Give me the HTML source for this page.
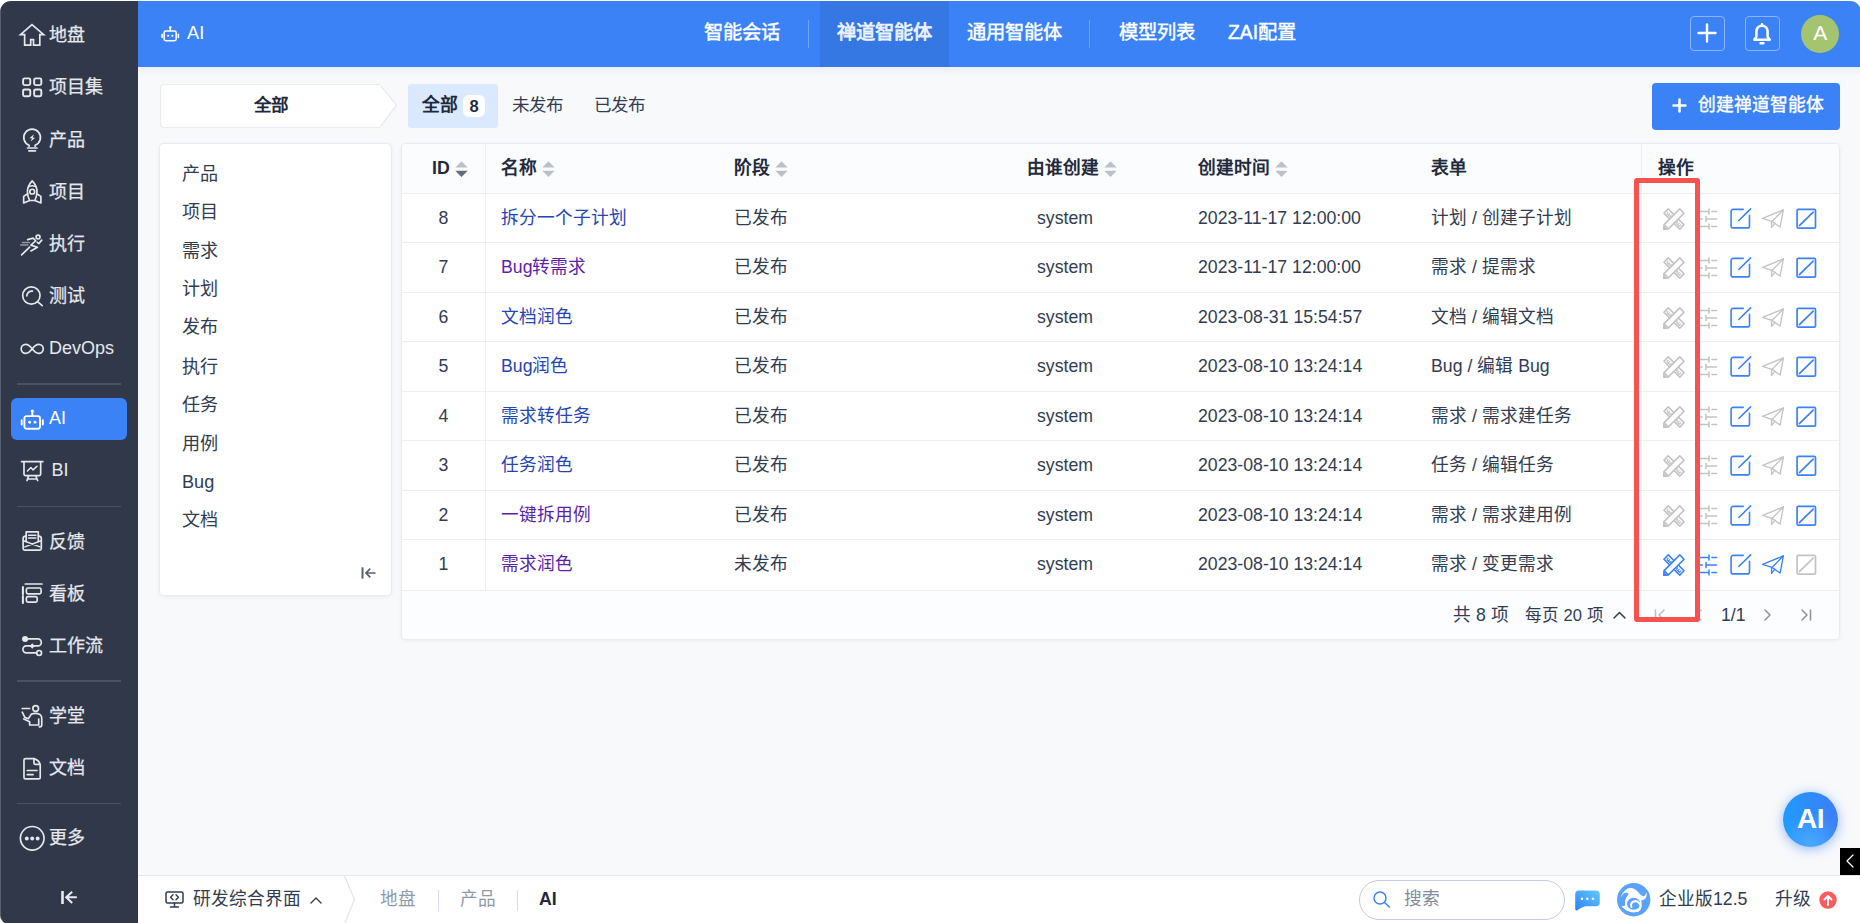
<!DOCTYPE html>
<html lang="zh-CN">
<head>
<meta charset="utf-8">
<title>AI</title>
<style>
*{box-sizing:border-box;margin:0;padding:0}
html,body{width:1860px;height:923px;overflow:hidden;background:#fff}
body{font-family:"Liberation Sans",sans-serif;font-size:17.5px;color:#313c52;position:relative}
a{text-decoration:none;color:inherit}
svg{display:block;overflow:visible}
.abs{position:absolute}
#app{position:absolute;left:0;top:1px;width:1861px;height:923px;border-radius:11px 11px 9px 9px;overflow:hidden;background:#f8f9fb}
/* sidebar */
#side{position:absolute;left:0;top:0;width:138px;height:923px;background:#303849;color:#e6e8ed}
.nav{position:absolute;left:11px;width:116px;height:42px;border-radius:6px;font-size:18px;line-height:45px;white-space:nowrap}
.nav.on{background:#3b82f6;color:#fff}
.nav svg{position:absolute;left:7.7px;top:8.5px;width:26px;height:26px;fill:none;stroke:currentColor;stroke-width:1.55;stroke-linecap:round;stroke-linejoin:round}
.nav span{position:absolute;left:38.1px;top:0;-webkit-text-stroke:.25px currentColor}
.sdiv{position:absolute;left:17px;width:104px;height:1px;background:#4a5366}
.lp{left:182px;line-height:38.400px;font-size:18.100px;white-space:nowrap}
/* top */
#top{position:absolute;left:138px;top:0;width:1723px;height:66px;background:#3b82f6;color:#fff}
#topshadow{position:absolute;left:138px;top:66px;width:1723px;height:10px;background:linear-gradient(#eef0f4,#f8f9fb)}
.tnav{position:absolute;top:0;height:66px;line-height:64px;font-size:19.300px;color:#fff;text-align:center;white-space:nowrap;-webkit-text-stroke:.45px #fff}
.tnav.on{background:#3578e3;color:#edf2fd;-webkit-text-stroke:.75px #edf2fd}
.tsep{position:absolute;top:19px;width:1px;height:28px;background:#6fa3f9}
.tbtn{position:absolute;top:15px;width:35px;height:35px;border:1px solid #8db4fa;border-radius:4px}
/* bottom */
#bottom{position:absolute;left:138px;top:874px;width:1723px;height:49px;background:#fff;border-top:1px solid #e4e7ee}

/* table */
#tbl{position:absolute;left:402px;top:143px;width:1437px;height:495px;background:#fff;border-radius:4px;box-shadow:0 0 0 1px #e9ebf2,0 1px 4px rgba(40,60,110,.10);overflow:hidden;font-size:17.700px}
.thead{position:absolute;left:0;top:0;width:100%;height:49px;background:#fbfcfe}
.hline{position:absolute;left:0;width:100%;height:1px;background:#eceef3}
.vline{position:absolute;top:0;width:1px;background:#eceef3}
.th{position:absolute;top:0;height:49px;line-height:48px;font-weight:bold;color:#1f2a3d;white-space:nowrap}
.sort{position:absolute;top:17px;width:13px;height:16.400px}
.sort.on .d{fill:#5b6373}
.tr{position:absolute;left:0;width:100%;height:49.550px}
.td{position:absolute;top:0;height:49px;line-height:48.500px;white-space:nowrap}
.td.c{text-align:center}
.lk{color:#2545b2}
.lk.v{color:#5c1fa5}
.ic{position:absolute;top:12.900px;width:24px;height:24px;color:#c3c3c3}
.ic.on{color:#3b82f6}
.tfoot{position:absolute;left:0;top:447px;width:100%;height:48px;line-height:48px;background:#fcfdfe;white-space:nowrap}
.pg{fill:none;stroke:#8c92a0;stroke-width:1.500;stroke-linecap:round;stroke-linejoin:round}
.pg.dis{stroke:#b9bec9}
#redbox{position:absolute;left:1634px;top:176.500px;width:66.200px;height:444.300px;border:5px solid #f95050;border-radius:3px}
</style>
</head>
<body>
<div id="app">
<div id="side">
<a class="nav" style="top:12px"><svg viewBox="0 0 24 24"><path d="M12 2.500 22.800 11.700H19.200V21.300H13.400V16.300H10.800V21.300H5.200V11.700H1.400z" stroke-linejoin="miter"/></svg><span>地盘</span></a>
<a class="nav" style="top:64.25px"><svg viewBox="0 0 24 24"><g stroke-width="1.800"><rect x="3.800" y="4.050" width="6.600" height="6.200" rx="1.400"/><rect x="14" y="4.050" width="6.600" height="6.200" rx="1.400"/><rect x="3.800" y="14.250" width="6.600" height="6.200" rx="1.400"/><rect x="14" y="14.250" width="6.600" height="6.200" rx="1.400"/></g></svg><span>项目集</span></a>
<a class="nav" style="top:116.5px"><svg viewBox="0 0 24 24"><path d="M9.300 18.600v-.800a7.700 7.700 0 1 1 5.600 0v.800"/><path d="M7.900 20.300h8.700M9.100 22.900h6.100"/><path d="M13.800 7.600 9.600 11.200h2.400l-1.200 3.200 4.200-3.600h-2.400z" fill="currentColor" stroke="none"/></svg><span>产品</span></a>
<a class="nav" style="top:168.75px"><svg viewBox="0 0 24 24"><path d="M12.200 2.600C9 6 7.800 9.500 7.800 12.400c0 3 .800 6 2 8.400h4.800c1.200-2.400 2-5.400 2-8.400 0-2.900-1.200-6.400-4.400-9.800z"/><path d="M9.600 7.800q2.600-1.400 5.200 0" stroke-width="1.400"/><circle cx="12.200" cy="12.600" r="2.200"/><path d="M7.600 14.800 4.300 17v6l5-2M16.800 14.800l3.400 2.200v6l-5-2"/></svg><span>项目</span></a>
<a class="nav" style="top:221px"><svg viewBox="0 0 24 24"><circle cx="17.600" cy="5.600" r="1.800"/><path d="M8 8 13 6.600 15.400 9 11 13l6 2-6 3.400M9.800 14.800 2.400 22M16.800 10.400l1.600 1.200 2.600-3.200"/><path d="M3.200 10.600h6.400M1.600 13h6.600" stroke-width="1.400" opacity=".55"/></svg><span>执行</span></a>
<a class="nav" style="top:273.25px"><svg viewBox="0 0 24 24"><circle cx="11.400" cy="11.500" r="8"/><path d="M17.400 17.500l4 3.400"/><path d="M7.200 11.900a4.600 4.600 0 0 1 5.200-4.400"/></svg><span>测试</span></a>
<a class="nav" style="top:325.5px"><svg viewBox="0 0 24 24"><path d="M12.200 12.800C10 9.800 8.300 8.600 6.200 8.600a4.200 4.200 0 0 0 0 8.400c2.100 0 3.800-1.200 6-4.200s3.900-4.200 6-4.200a4.200 4.200 0 0 1 0 8.400c-2.100 0-3.800-1.200-6-4.200z"/></svg><span style="top:-0.800px;-webkit-text-stroke:0">DevOps</span></a>
<a class="nav on" style="top:397px"><svg viewBox="0 0 24 24"><g stroke-width="1.800"><rect x="5" y="8.400" width="14.400" height="11.600" rx="2"/><path d="M12.300 8V5M2.500 12.200v4M22 12.200v4"/></g><circle cx="12.300" cy="3.800" r="1.500" fill="currentColor" stroke="none"/><circle cx="9.800" cy="14.100" r="1.300" fill="currentColor" stroke="none"/><circle cx="14.800" cy="14.100" r="1.300" fill="currentColor" stroke="none"/></svg><span style="top:-2.300px;-webkit-text-stroke:0">AI</span></a>
<a class="nav" style="top:448.75px"><svg viewBox="0 0 24 24"><path d="M2.400 3.400H22M4.600 3.400V14.800a1.400 1.400 0 0 0 1.400 1.400H18.600a1.400 1.400 0 0 0 1.400-1.400V3.400M8.800 16.800 7.400 20.800M15.600 16.800l1.600 4M8 19.400h8.600"/><path d="M7.800 12l3.200-3.200 2 2.200 3.600-3.400" stroke-width="1.400"/></svg><span style="top:-1.500px;left:40.500px;-webkit-text-stroke:0">BI</span></a>
<a class="nav" style="top:518.5px"><svg viewBox="0 0 24 24"><path d="M6.600 12.400V3.600H17.800V12.400"/><path d="M8.800 6.600h6.800M8.800 9.200h6.800" stroke-width="1.400"/><path d="M6.600 7.200Q3.800 7.600 3.800 9.500V19a1.400 1.400 0 0 0 1.400 1.400H19.200a1.400 1.400 0 0 0 1.400-1.400V9.500Q20.600 7.600 17.800 7.200"/><path d="M4.200 11.800 19.400 17.400M20.200 11.800 5.400 17.400" stroke-width="1.400"/></svg><span>反馈</span></a>
<a class="nav" style="top:570.5px"><svg viewBox="0 0 24 24"><path d="M5.800 3.700h15.400"/><path d="M3.600 6.600v6.600M3.600 14.800v6.400" stroke-width="1.900"/><rect x="6.800" y="7.400" width="13.600" height="5.400" rx="1.500"/><rect x="6.800" y="15.400" width="10" height="5" rx="1.500"/></svg><span>看板</span></a>
<a class="nav" style="top:622.5px"><svg viewBox="0 0 24 24"><circle cx="5.600" cy="6.400" r="2.800" fill="currentColor" stroke="none"/><path d="M8 6.400H17.400a3.200 3.200 0 0 1 0 6.400H6.800a3.200 3.200 0 0 0 0 6.400H16"/><circle cx="18.600" cy="19.300" r="2.200"/><path d="M12.200 10.400l2.300 2.500-2.300 2.500-2.300-2.500z" fill="currentColor" stroke="none"/></svg><span>工作流</span></a>
<a class="nav" style="top:692.5px"><svg viewBox="0 0 24 24"><circle cx="15.400" cy="6" r="2.600"/><path d="M3 6h6.800"/><path d="M3 9.400 5.400 14.200 8.600 15.400 11.400 11.200Q15.400 9.600 19.400 11.600 21 12.800 21 15V21.600Q20.800 23.200 18.800 23"/><path d="M4.400 15.600 9.800 18.200V21.200H18.200V15.800"/></svg><span>学堂</span></a>
<a class="nav" style="top:745px"><svg viewBox="0 0 24 24"><path d="M13.800 3.300H6a1.400 1.400 0 0 0-1.400 1.400V20.700a1.400 1.400 0 0 0 1.400 1.400H18.200a1.400 1.400 0 0 0 1.400-1.400V9.100Q18.600 4.600 13.800 3.300z"/><path d="M13.800 3.300V7.300a1.400 1.400 0 0 0 1.400 1.400H19.400"/><path d="M7.600 14.300h9M7.600 18.100h5.400"/></svg><span>文档</span></a>
<a class="nav" style="top:815px"><svg viewBox="0 0 24 24"><circle cx="12.200" cy="12.300" r="10.900"/><circle cx="7.200" cy="12.400" r="1.800" fill="currentColor" stroke="none"/><circle cx="12.200" cy="12.400" r="1.800" fill="currentColor" stroke="none"/><circle cx="17.200" cy="12.400" r="1.800" fill="currentColor" stroke="none"/></svg><span>更多</span></a>
<div class="sdiv" style="top:382px;height:2px"></div>
<div class="sdiv" style="top:505px;height:1px"></div>
<div class="sdiv" style="top:679px;height:2px"></div>
<div class="sdiv" style="top:802px;height:1px"></div>
<svg class="abs" style="left:58px;top:888px;width:22px;height:18px;fill:none;stroke:#e9ebf0;stroke-width:2;stroke-linecap:butt;stroke-linejoin:miter" viewBox="0 0 22 18"><path d="M4.500 2.100v12.800" stroke-width="2.600"/><path d="M18.800 8.300H7.600M14.200 2.700 8.200 8.300l6 5.700"/></svg>
</div>
<div id="top">
<svg class="abs" style="left:21.700px;top:23.200px;width:20px;height:20px;fill:none;stroke:#fff;stroke-width:1.900;stroke-linecap:round;stroke-linejoin:round" viewBox="0 0 24 24"><rect x="5" y="8.400" width="14.400" height="11.600" rx="2"/><path d="M12.300 8V5M2.500 12.200v4M22 12.200v4"/><circle cx="12.300" cy="3.800" r="1.500" fill="#fff" stroke="none"/><circle cx="9.800" cy="14.100" r="1.300" fill="#fff" stroke="none"/><circle cx="14.800" cy="14.100" r="1.300" fill="#fff" stroke="none"/></svg>
<div class="abs" style="left:49px;top:0;height:66px;line-height:64px;font-size:18.200px">AI</div>
<a class="tnav" style="left:549.500px;width:108px">智能会话</a>
<div class="tsep" style="left:669.700px"></div>
<a class="tnav on" style="left:682.200px;width:129px">禅道智能体</a>
<a class="tnav" style="left:810.500px;width:131px">通用智能体</a>
<div class="tsep" style="left:951px"></div>
<a class="tnav" style="left:963.800px;width:110px">模型列表</a>
<a class="tnav" style="left:1074px;width:100px">ZAI配置</a>
<div class="tbtn" style="left:1552px"><svg class="abs" style="left:6.300px;top:5.800px;width:20px;height:20px;stroke:#fff;stroke-width:2.400;stroke-linecap:round" viewBox="0 0 20 20"><path d="M10 1.500v17M1.500 10h17"/></svg></div>
<div class="tbtn" style="left:1607px"><svg class="abs" style="left:6.300px;top:4.800px;width:20px;height:24px;fill:none;stroke:#fff;stroke-width:2.500;stroke-linecap:round;stroke-linejoin:round" viewBox="0 0 20 24"><path d="M10 3.700c-3.400 0-5.600 2.600-5.600 6v5L2.300 17.800h15.400l-2.100-3.100v-5c0-3.400-2.200-6-5.600-6z"/><path d="M10 3.500V2.300M8.600 21.200h2.800"/></svg></div>
<div class="abs" style="left:1663.200px;top:13.500px;width:38px;height:38px;border-radius:50%;background:#a4c46f;color:#fff;font-size:21px;line-height:36.500px;text-align:center">A</div>
</div>
<div id="topshadow"></div>
<!-- filter row -->
<div class="abs" style="left:160px;top:83px;width:221px;height:44px;background:#fff;border:1px solid #e9ebf2;border-right:0;border-radius:4px 0 0 4px"></div>
<svg class="abs" style="left:380px;top:83px;width:18px;height:44px" viewBox="0 0 18 44"><path d="M0 0.500 0.800 2 16.500 21 0.800 42 0 43.500z" fill="#fff"/><path d="M0.800 2 16.500 21 0.800 42" fill="none" stroke="#e1e4ed" stroke-width="1.100"/></svg>
<div class="abs" style="left:160px;top:83px;width:221px;height:44px;line-height:42px;text-align:center;font-weight:bold;font-size:17.5px;color:#1f2a3d">全部</div>
<div class="abs" style="left:408px;top:83px;width:90px;height:44px;background:#dbe9fe;border-radius:3px"></div>
<div class="abs" style="left:421.500px;top:83px;height:44px;line-height:42px;font-size:17.800px;font-weight:bold;color:#1f2a3d">全部</div>
<div class="abs" style="left:463px;top:94px;width:22px;height:22px;background:#fff;border-radius:6px;font-size:16.500px;font-weight:bold;line-height:22px;text-align:center;color:#1f2a3d">8</div>
<div class="abs" style="left:512px;top:83px;height:44px;line-height:42px">未发布</div>
<div class="abs" style="left:594px;top:83px;height:44px;line-height:42px">已发布</div>
<a class="abs" style="left:1652px;top:81.600px;width:188.200px;height:47px;background:#3b82f6;border-radius:4px;color:#fff">
<svg class="abs" style="left:20.200px;top:15.500px;width:15px;height:15px;stroke:#fff;stroke-width:2.500;stroke-linecap:round" viewBox="0 0 15 15"><path d="M7.500 1.500v12M1.500 7.500h12"/></svg>
<span class="abs" style="left:46px;top:0;line-height:45.500px;font-size:17.800px;white-space:nowrap;-webkit-text-stroke:.4px #fff">创建禅道智能体</span></a>
<!-- left panel -->
<div class="abs" style="left:160px;top:142.500px;width:230.700px;height:451.500px;background:#fff;border-radius:4px;box-shadow:0 0 0 1px #e9ebf2,0 1px 4px rgba(40,60,110,.10)"></div>
<div class="abs lp" style="top:153.65px">产品</div>
<div class="abs lp" style="top:192.08px">项目</div>
<div class="abs lp" style="top:230.51px">需求</div>
<div class="abs lp" style="top:268.94px">计划</div>
<div class="abs lp" style="top:307.37px">发布</div>
<div class="abs lp" style="top:346.80px">执行</div>
<div class="abs lp" style="top:385.43px">任务</div>
<div class="abs lp" style="top:423.66px">用例</div>
<div class="abs lp" style="top:462.09px">Bug</div>
<div class="abs lp" style="top:500.12px">文档</div>
<svg class="abs" style="left:361px;top:565px;width:15px;height:14px;fill:none;stroke:#566074;stroke-width:1.700;stroke-linecap:butt;stroke-linejoin:miter" viewBox="0 0 15 14"><path d="M1.500 1.300v11.400" stroke-width="2"/><path d="M14.500 7H5M9.300 2.700 5 7l4.300 4.300"/></svg>
<svg width="0" height="0" style="position:absolute"><defs>
<symbol id="i-design" viewBox="-0.200 -0.200 24.400 24.400"><g fill="none" stroke="currentColor" stroke-width="1.600" stroke-linejoin="round"><g transform="rotate(45 12 12)"><rect x="0.600" y="8.900" width="22.800" height="6.200"/><path d="M2.800 13.300h4.600M2.800 13.300v-2.300M5.100 13.300v-2.300M7.400 13.300v-2.300M16.600 13.300h4.600M16.600 13.300v-2.300M18.900 13.300v-2.300M21.200 13.300v-2.300" stroke-width="1.200"/></g><g transform="rotate(-45 12 12)"><path d="M0.800 8.900H23.400V15.100H0.800z" fill="#fff"/><path d="M0.800 8.900 -2.600 12 0.800 15.100"/><path d="M-2.600 12l1.600-1.500v3z" fill="currentColor"/></g></g></symbol>
<symbol id="i-slider" viewBox="0 0 24 24"><g fill="none" stroke="currentColor" stroke-width="1.500" stroke-linecap="round"><path d="M2.400 4.500H14M16.900 4.500h4.700M14 2v5M2.400 12h4.900M11 12h10.600M11 9.500v5M2.400 19.500H14M16.900 19.500h4.700M14 17v5"/></g></symbol>
<symbol id="i-edit" viewBox="0 0 24 24"><g fill="none" stroke="currentColor" stroke-width="1.600" stroke-linecap="round" stroke-linejoin="round"><path d="M15.200 2.400H5.100a2 2 0 0 0-2 2v14.500a2 2 0 0 0 2 2H19.500a2 2 0 0 0 2-2V8.400"/><path d="M22.600 1.900 10.800 13.500"/></g></symbol>
<symbol id="i-plane" viewBox="0.100 -0.500 25 25"><g fill="none" stroke="currentColor" stroke-width="1.400" stroke-linejoin="round" stroke-linecap="round"><path d="M23.400 2.600 1.800 11.400l9.700 3.100L20 20.400z"/><path d="M23.400 2.600 11.500 14.500M11.100 15v5.800l3.400-4.300"/></g></symbol>
<symbol id="i-ban" viewBox="0 0 24 24"><g fill="none" stroke="currentColor" stroke-width="1.700" stroke-linecap="round" stroke-linejoin="round"><rect x="3.100" y="2.300" width="18.400" height="18.800" rx="1.200"/><path d="M5.400 18.600 19.200 5.200"/></g></symbol>
</defs></svg>
<div id="tbl">
<div class="thead"></div>
<div class="vline" style="left:83px;height:447px"></div><div class="vline" style="left:1239px;height:447px"></div>
<div class="hline" style="top:49px"></div>
<div class="hline" style="top:98px"></div>
<div class="hline" style="top:148px"></div>
<div class="hline" style="top:197px"></div>
<div class="hline" style="top:247px"></div>
<div class="hline" style="top:296px"></div>
<div class="hline" style="top:346px"></div>
<div class="hline" style="top:395px"></div>
<div class="hline" style="top:446px"></div>
<div class="th" style="left:30px">ID</div>
<svg class="sort" style="left:52.5px" viewBox="0 0 13 16.400"><path d="M6.500 0.300 12.700 6.600H0.300z" fill="#bcc0c9"/><path d="M6.500 16.100 12.700 9.700H0.300z" fill="#656c7c"/></svg>
<div class="th" style="left:99px">名称</div>
<svg class="sort" style="left:139.5px" viewBox="0 0 13 16.400"><path d="M6.500 0.300 12.700 6.600H0.300z" fill="#bcc0c9"/><path d="M6.500 16.100 12.700 9.700H0.300z" fill="#bcc0c9"/></svg>
<div class="th" style="left:332px">阶段</div>
<svg class="sort" style="left:372.5px" viewBox="0 0 13 16.400"><path d="M6.500 0.300 12.700 6.600H0.300z" fill="#bcc0c9"/><path d="M6.500 16.100 12.700 9.700H0.300z" fill="#bcc0c9"/></svg>
<div class="th" style="left:625px">由谁创建</div>
<svg class="sort" style="left:701.5px" viewBox="0 0 13 16.400"><path d="M6.500 0.300 12.700 6.600H0.300z" fill="#bcc0c9"/><path d="M6.500 16.100 12.700 9.700H0.300z" fill="#bcc0c9"/></svg>
<div class="th" style="left:796px">创建时间</div>
<svg class="sort" style="left:872.5px" viewBox="0 0 13 16.400"><path d="M6.500 0.300 12.700 6.600H0.300z" fill="#bcc0c9"/><path d="M6.500 16.100 12.700 9.700H0.300z" fill="#bcc0c9"/></svg>
<div class="th" style="left:1029px">表单</div>
<div class="th" style="left:1255.7px">操作</div>
<div class="tr" style="top:50px">
<div class="td c" style="left:0;width:83px">8</div>
<a class="td lk" style="left:99px">拆分一个子计划</a>
<div class="td" style="left:331.500px">已发布</div>
<div class="td c" style="left:613px;width:100px">system</div>
<div class="td" style="left:796px">2023-11-17 12:00:00</div>
<div class="td" style="left:1029px">计划 / 创建子计划</div>
<svg class="ic" style="left:1260.0px"><use href="#i-design"/></svg>
<svg class="ic" style="left:1292.8px"><use href="#i-slider"/></svg>
<svg class="ic on" style="left:1326.0px"><use href="#i-edit"/></svg>
<svg class="ic" style="left:1358.8px"><use href="#i-plane"/></svg>
<svg class="ic on" style="left:1391.8px"><use href="#i-ban"/></svg>
</div>
<div class="tr" style="top:99px">
<div class="td c" style="left:0;width:83px">7</div>
<a class="td lk v" style="left:99px">Bug转需求</a>
<div class="td" style="left:331.500px">已发布</div>
<div class="td c" style="left:613px;width:100px">system</div>
<div class="td" style="left:796px">2023-11-17 12:00:00</div>
<div class="td" style="left:1029px">需求 / 提需求</div>
<svg class="ic" style="left:1260.0px"><use href="#i-design"/></svg>
<svg class="ic" style="left:1292.8px"><use href="#i-slider"/></svg>
<svg class="ic on" style="left:1326.0px"><use href="#i-edit"/></svg>
<svg class="ic" style="left:1358.8px"><use href="#i-plane"/></svg>
<svg class="ic on" style="left:1391.8px"><use href="#i-ban"/></svg>
</div>
<div class="tr" style="top:149px">
<div class="td c" style="left:0;width:83px">6</div>
<a class="td lk" style="left:99px">文档润色</a>
<div class="td" style="left:331.500px">已发布</div>
<div class="td c" style="left:613px;width:100px">system</div>
<div class="td" style="left:796px">2023-08-31 15:54:57</div>
<div class="td" style="left:1029px">文档 / 编辑文档</div>
<svg class="ic" style="left:1260.0px"><use href="#i-design"/></svg>
<svg class="ic" style="left:1292.8px"><use href="#i-slider"/></svg>
<svg class="ic on" style="left:1326.0px"><use href="#i-edit"/></svg>
<svg class="ic" style="left:1358.8px"><use href="#i-plane"/></svg>
<svg class="ic on" style="left:1391.8px"><use href="#i-ban"/></svg>
</div>
<div class="tr" style="top:198px">
<div class="td c" style="left:0;width:83px">5</div>
<a class="td lk" style="left:99px">Bug润色</a>
<div class="td" style="left:331.500px">已发布</div>
<div class="td c" style="left:613px;width:100px">system</div>
<div class="td" style="left:796px">2023-08-10 13:24:14</div>
<div class="td" style="left:1029px">Bug / 编辑 Bug</div>
<svg class="ic" style="left:1260.0px"><use href="#i-design"/></svg>
<svg class="ic" style="left:1292.8px"><use href="#i-slider"/></svg>
<svg class="ic on" style="left:1326.0px"><use href="#i-edit"/></svg>
<svg class="ic" style="left:1358.8px"><use href="#i-plane"/></svg>
<svg class="ic on" style="left:1391.8px"><use href="#i-ban"/></svg>
</div>
<div class="tr" style="top:248px">
<div class="td c" style="left:0;width:83px">4</div>
<a class="td lk" style="left:99px">需求转任务</a>
<div class="td" style="left:331.500px">已发布</div>
<div class="td c" style="left:613px;width:100px">system</div>
<div class="td" style="left:796px">2023-08-10 13:24:14</div>
<div class="td" style="left:1029px">需求 / 需求建任务</div>
<svg class="ic" style="left:1260.0px"><use href="#i-design"/></svg>
<svg class="ic" style="left:1292.8px"><use href="#i-slider"/></svg>
<svg class="ic on" style="left:1326.0px"><use href="#i-edit"/></svg>
<svg class="ic" style="left:1358.8px"><use href="#i-plane"/></svg>
<svg class="ic on" style="left:1391.8px"><use href="#i-ban"/></svg>
</div>
<div class="tr" style="top:297px">
<div class="td c" style="left:0;width:83px">3</div>
<a class="td lk" style="left:99px">任务润色</a>
<div class="td" style="left:331.500px">已发布</div>
<div class="td c" style="left:613px;width:100px">system</div>
<div class="td" style="left:796px">2023-08-10 13:24:14</div>
<div class="td" style="left:1029px">任务 / 编辑任务</div>
<svg class="ic" style="left:1260.0px"><use href="#i-design"/></svg>
<svg class="ic" style="left:1292.8px"><use href="#i-slider"/></svg>
<svg class="ic on" style="left:1326.0px"><use href="#i-edit"/></svg>
<svg class="ic" style="left:1358.8px"><use href="#i-plane"/></svg>
<svg class="ic on" style="left:1391.8px"><use href="#i-ban"/></svg>
</div>
<div class="tr" style="top:347px">
<div class="td c" style="left:0;width:83px">2</div>
<a class="td lk v" style="left:99px">一键拆用例</a>
<div class="td" style="left:331.500px">已发布</div>
<div class="td c" style="left:613px;width:100px">system</div>
<div class="td" style="left:796px">2023-08-10 13:24:14</div>
<div class="td" style="left:1029px">需求 / 需求建用例</div>
<svg class="ic" style="left:1260.0px"><use href="#i-design"/></svg>
<svg class="ic" style="left:1292.8px"><use href="#i-slider"/></svg>
<svg class="ic on" style="left:1326.0px"><use href="#i-edit"/></svg>
<svg class="ic" style="left:1358.8px"><use href="#i-plane"/></svg>
<svg class="ic on" style="left:1391.8px"><use href="#i-ban"/></svg>
</div>
<div class="tr" style="top:396px">
<div class="td c" style="left:0;width:83px">1</div>
<a class="td lk v" style="left:99px">需求润色</a>
<div class="td" style="left:331.500px">未发布</div>
<div class="td c" style="left:613px;width:100px">system</div>
<div class="td" style="left:796px">2023-08-10 13:24:14</div>
<div class="td" style="left:1029px">需求 / 变更需求</div>
<svg class="ic on" style="left:1260.0px"><use href="#i-design"/></svg>
<svg class="ic on" style="left:1292.8px"><use href="#i-slider"/></svg>
<svg class="ic on" style="left:1326.0px"><use href="#i-edit"/></svg>
<svg class="ic on" style="left:1358.8px"><use href="#i-plane"/></svg>
<svg class="ic" style="left:1391.8px"><use href="#i-ban"/></svg>
</div>
<div class="tfoot">
<span class="abs" style="left:1051px;top:0">共 8 项</span>
<span class="abs" style="left:1123px;top:1px;font-size:16.550px">每页 20 项</span>
<svg class="abs pg" style="left:1210.500px;top:20px;width:13px;height:8px;stroke:#313c52" viewBox="0 0 13 8"><path d="M1 7 6.500 1.500 12 7"/></svg>
<svg class="abs pg dis" style="left:1252px;top:18px;width:11px;height:12px" viewBox="0 0 11 12"><path d="M1.500 1v10M10 1 5 6l5 5"/></svg>
<svg class="abs pg dis" style="left:1293px;top:18px;width:7px;height:12px" viewBox="0 0 7 12"><path d="M6 1 1 6l5 5"/></svg>
<span class="abs" style="left:1319px;top:0">1/1</span>
<svg class="abs pg" style="left:1362px;top:18px;width:7px;height:12px" viewBox="0 0 7 12"><path d="M1 1l5 5-5 5"/></svg>
<svg class="abs pg" style="left:1398.500px;top:18px;width:11px;height:12px" viewBox="0 0 11 12"><path d="M9.500 1v10M1 1l5 5-5 5"/></svg>
</div>
</div>
<div id="redbox"></div>
<!-- float AI -->
<div class="abs" style="left:1783px;top:791px;width:55px;height:55px;border-radius:50%;background:radial-gradient(circle at 50% 95%,#49a9ff 0%,rgba(73,169,255,0) 55%),linear-gradient(90deg,#1f9bff 0%,#3f7df6 100%);box-shadow:0 2px 12px rgba(59,130,246,.55);color:#fff;font-weight:bold;font-size:28px;line-height:54px;text-align:center;letter-spacing:-.5px">AI</div>
<div class="abs" style="left:1840px;top:847px;width:21px;height:27px;background:#000"><svg class="abs" style="left:6px;top:6px;width:8px;height:14px;fill:none;stroke:#fff;stroke-width:1.300;stroke-linecap:round;stroke-linejoin:round" viewBox="0 0 8 14"><path d="M7 1 1 7l6 6"/></svg></div>
<div id="bottom">
<svg class="abs" style="left:27px;top:15px;width:19px;height:17px;fill:none;stroke:#313c52;stroke-width:1.500;stroke-linecap:round;stroke-linejoin:round" viewBox="0 0 19 17"><rect x="1" y="1" width="17" height="11" rx="1.500"/><path d="M9.500 12v4M5.500 16h8"/><path d="M8 3.800 5.600 6.300 8 8.800M11 3.800l2.400 2.500L11 8.800" stroke-width="1.400"/></svg>
<div class="abs" style="left:55px;top:0;line-height:47.500px;font-size:17.700px;white-space:nowrap">研发综合界面</div>
<svg class="abs" style="left:172px;top:21px;width:12px;height:7px;fill:none;stroke:#313c52;stroke-width:1.400;stroke-linecap:round;stroke-linejoin:round" viewBox="0 0 12 7"><path d="M1 6 6 1l5 5"/></svg>
<svg class="abs" style="left:205px;top:0;width:13px;height:48px;fill:none;stroke:#e3e6ec;stroke-width:1.300" viewBox="0 0 13 48"><path d="M1 -1 11.500 23.500 1 49"/></svg>
<div class="abs" style="left:242px;top:0;line-height:47.500px;font-size:17.700px;color:#9299a6">地盘</div>
<div class="abs" style="left:299.500px;top:14px;width:1px;height:21px;background:#d9dde5"></div>
<div class="abs" style="left:321.500px;top:0;line-height:47.500px;font-size:17.700px;color:#9299a6">产品</div>
<div class="abs" style="left:379px;top:14px;width:1px;height:21px;background:#d9dde5"></div>
<div class="abs" style="left:401px;top:0;line-height:47.500px;font-size:17.700px;font-weight:bold;color:#1f2a3d">AI</div>
<div class="abs" style="left:1221px;top:4px;width:206px;height:40px;border:1px solid #c3cbe2;border-radius:20px"></div>
<svg class="abs" style="left:1234.500px;top:15px;width:18px;height:17px;fill:none;stroke:#3b82f6;stroke-width:1.500;stroke-linecap:round" viewBox="0 0 18 17"><circle cx="7" cy="7" r="6"/><path d="M11.500 11.500 16.500 16"/></svg>
<div class="abs" style="left:1266px;top:0;line-height:47.500px;font-size:17.700px;color:#838a9d">搜索</div>
<svg class="abs" style="left:1437px;top:13.500px;width:25px;height:21px" viewBox="0 0 25 21"><defs><linearGradient id="cg" x1="0" y1="1" x2="1" y2="0"><stop offset="0" stop-color="#2f80fa"/><stop offset="1" stop-color="#62cbfc"/></linearGradient></defs><path d="M4 0.500h17a3.800 3.800 0 0 1 3.800 3.800v8.200a3.800 3.800 0 0 1-3.800 3.800H13C8 16.300 5 18.500 2.500 20.300Q0.200 21 0.200 19V4.300A3.800 3.800 0 0 1 4 0.500z" fill="url(#cg)"/><circle cx="7" cy="8.800" r="1.250" fill="#fff"/><circle cx="12.300" cy="8.800" r="1.250" fill="#fff"/><circle cx="17.900" cy="8.800" r="1.250" fill="#fff"/></svg>
<svg class="abs" style="left:1479.150px;top:7px;width:33.400px;height:33.400px" viewBox="150 105 700 700"><circle cx="500" cy="455" r="350" fill="#5aa2fa"/><path d="M232 402C250 330 330 215 425 210C510 208 570 265 625 330C665 378 705 400 735 365C755 340 760 315 766 298C790 400 740 468 650 472C700 560 650 720 510 722C400 722 300 660 246 592L318 574C300 500 320 410 388 340C350 300 290 310 262 360C250 380 240 395 232 402z" fill="#fff"/><path d="M388 340C330 400 302 490 322 572L262 590C215 500 240 370 300 322C345 300 395 315 388 340z" fill="#5aa2fa"/><ellipse cx="500" cy="540" rx="140" ry="128" fill="#5aa2fa"/><path d="M455 605C430 555 455 492 520 486C600 482 652 545 640 615C634 650 610 680 580 695" fill="none" stroke="#fff" stroke-width="44" stroke-linecap="round"/><circle cx="528" cy="580" r="54" fill="#5aa2fa"/></svg>
<div class="abs" style="left:1521px;top:0;line-height:47.500px;font-size:17.700px;white-space:nowrap">企业版12.5</div>
<div class="abs" style="left:1637px;top:0;line-height:47.500px;font-size:17.700px;white-space:nowrap">升级</div>
<svg class="abs" style="left:1681px;top:15px;width:18px;height:18px" viewBox="0 0 18 18"><circle cx="9" cy="9" r="8.700" fill="#f85c5c"/><path d="M9 14V5.500M5.500 8.500 9 5l3.500 3.500" fill="none" stroke="#fff" stroke-width="1.900" stroke-linecap="round" stroke-linejoin="round"/></svg>
</div>
<div class="abs" style="left:0;top:0;width:1px;height:923px;background:rgba(255,255,255,.2)"></div>
</div></body></html>
